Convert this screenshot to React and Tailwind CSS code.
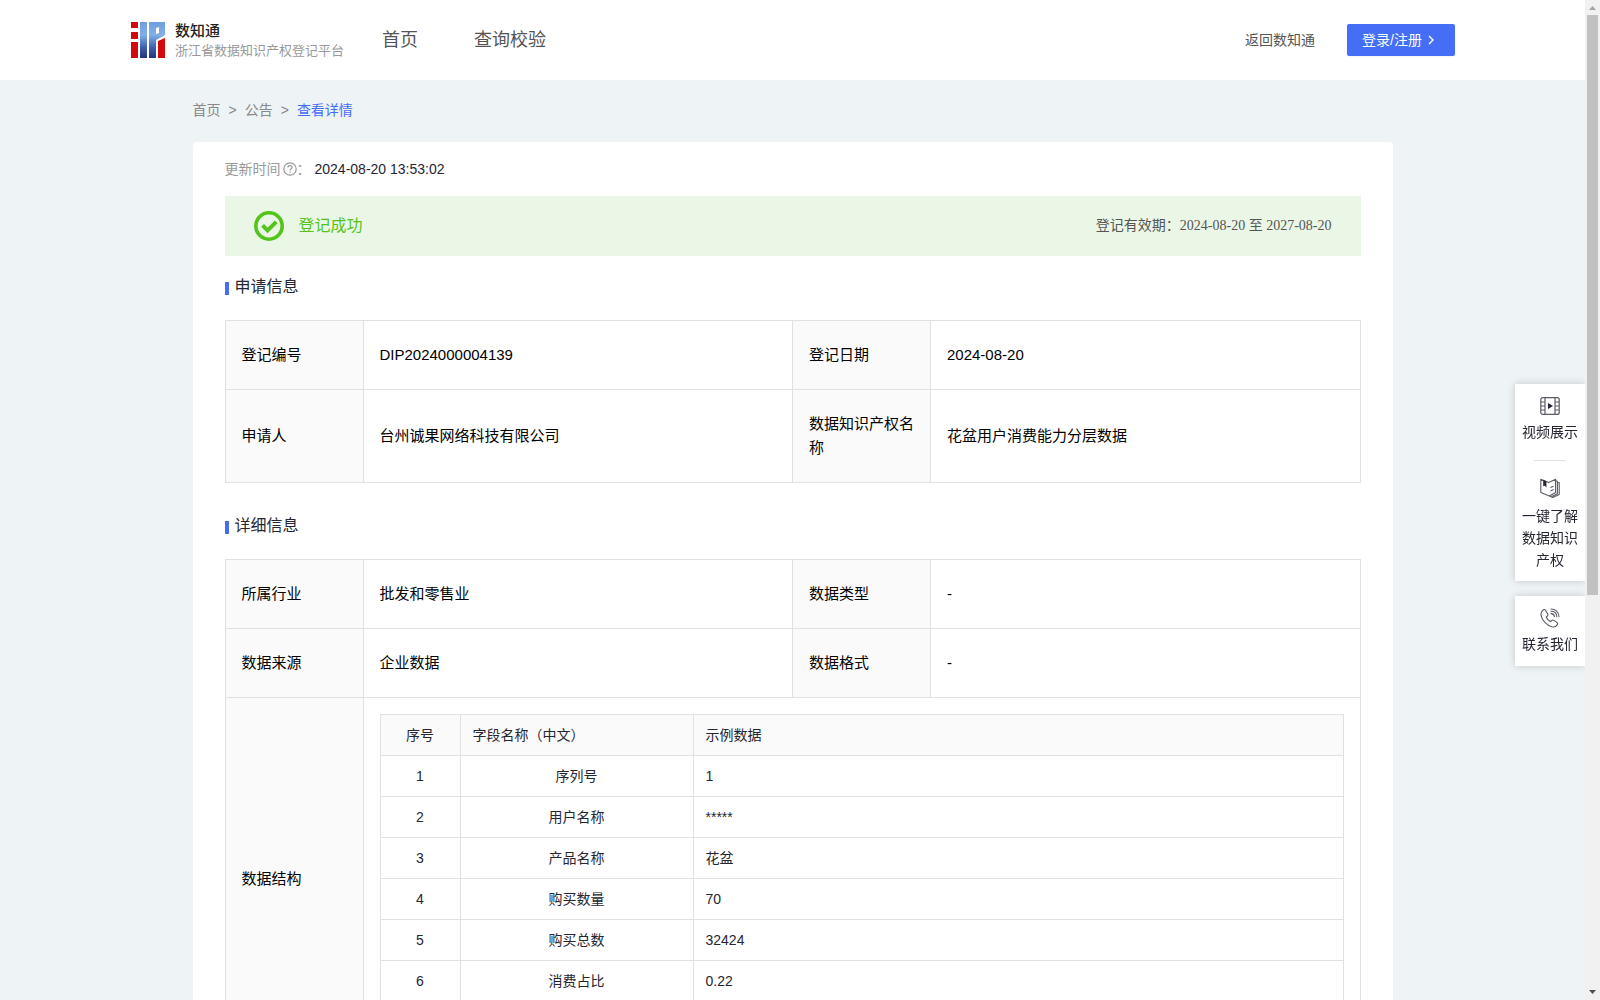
import React from 'react';

const fields = [
  { name: '序列号', sample: '1' },
  { name: '用户名称', sample: '*****' },
  { name: '产品名称', sample: '花盆' },
  { name: '购买数量', sample: '70' },
  { name: '购买总数', sample: '32424' },
  { name: '消费占比', sample: '0.22' },
];

const LogoIcon = () => (
  <svg className="w-[34px] h-9 shrink-0" viewBox="0 0 34 36">
    <defs>
      <linearGradient id="logoBlue" x1="0" y1="0" x2="0" y2="36" gradientUnits="userSpaceOnUse">
        <stop offset="0" stopColor="#6f9ede" />
        <stop offset="0.35" stopColor="#82b1e8" />
        <stop offset="0.7" stopColor="#3f62ae" />
        <stop offset="1" stopColor="#22357c" />
      </linearGradient>
    </defs>
    <path fill="#d20a10" d="M0 0h7v6H0zM0 10h7v7H0zM0 20h7v16H0zM27 19l7-3v20h-7z" />
    <path fill="url(#logoBlue)" fillRule="evenodd" d="M9 0h7v36H9zM18 0h16v13l-9 5v18h-7zM25 6v6l3-1V5z" />
  </svg>
);

const FilmIcon = () => (
  <svg className="w-5 h-5" viewBox="0 0 20 20" fill="none" stroke="#5a5b64" strokeWidth="1.2">
    <rect x="0.8" y="1.6" width="18.4" height="16.8" rx="2" />
    <path d="M5 2v16M15 2v16M1 6h4M1 10h4M1 14h4M15 6h4M15 10h4M15 14h4" />
    <path d="M8 7l5 3-5 3z" fill="#252631" stroke="none" />
  </svg>
);

const BookIcon = () => (
  <svg className="w-5 h-5" viewBox="0 0 20 20" fill="none" stroke="#5a5b64" strokeWidth="1.1" strokeLinejoin="round">
    <path d="M0.8 1.2L8.6 4.6 15.6 1.2V14.400L9.400 18 0.800 14.600z" />
    <path d="M15.600 2.800l1.800 0.400v12.600l-6 3M17.400 4.200l1.800 0.400v11.800l-6.400 3-3.400-1.400M10.4 9.6l3.200-1.400M10.4 13l3.200-1.400" />
    <path d="M3.2 1.8L6.4 3.2v6.2L4.8 7.8 3.2 8.2z" fill="#252631" stroke="none" />
  </svg>
);

const PhoneIcon = () => (
  <svg className="w-5 h-5" viewBox="0 0 20 20" fill="none" stroke="#5a5b64" strokeWidth="1.1" strokeLinecap="round" strokeLinejoin="round">
    <path d="M3.4 1.8C1.4 3.2 0.6 5 1 7.2c1 5.200 5.600 10.200 11 11.600 2.400 0.500 4.400-0.200 5.400-2.200 0.400-0.900 0.200-1.600-0.600-2.200l-2.800-2c-0.900-0.600-1.700-0.500-2.400 0.300l-0.900 1c-2-0.900-3.700-2.700-4.500-4.700l1-0.900c0.800-0.700 0.900-1.500 0.400-2.400L5.600 2.400C5 1.500 4.300 1.300 3.400 1.800z" />
    <path d="M11 1c4.400 0 7.800 3.200 8 7.600M11 3.200c3.200 0 5.600 2.200 5.800 5.400M11 5.600c1.900 0 3.200 1.200 3.400 3" />
  </svg>
);

const SuccessIcon = () => (
  <svg className="w-[30px] h-[30px]" viewBox="0 0 30 30" fill="none" stroke="#52c41a">
    <circle cx="15" cy="15" r="13.2" strokeWidth="3.6" />
    <path d="M8.600 14.400l5 5 8.600-8.600" strokeWidth="4" />
  </svg>
);

const SectionTitle = ({ children }) => (
  <h2 className="flex items-end gap-1.5 mb-[21px] text-base leading-6 text-[#252631]">
    <span className="w-1 h-[13px] mb-1 bg-[#446ef6]" />
    {children}
  </h2>
);

const Label = ({ children }) => (
  <th scope="row" className="border border-[#e1e1e1] bg-[#fafafa] px-4 text-left font-normal">{children}</th>
);

const Value = ({ children }) => (
  <td className="border border-[#e1e1e1] px-4">{children}</td>
);

const InfoTable = ({ children }) => (
  <table className="w-full table-fixed border-collapse text-[15px] leading-6 text-black">
    <colgroup>
      <col className="w-[138px]" />
      <col />
      <col className="w-[138px]" />
      <col />
    </colgroup>
    <tbody>{children}</tbody>
  </table>
);

const Header = () => (
  <header className="flex items-center h-20 pl-[131px] pr-[130px] bg-white">
    <a href="#" className="flex items-center gap-2.5">
      <LogoIcon />
      <span className="flex flex-col pt-0.5">
        <span className="text-[15px] leading-5 font-medium text-[#222]">数知通</span>
        <span className="text-[13px] leading-5 text-[#999]">浙江省数据知识产权登记平台</span>
      </span>
    </a>
    <nav className="flex gap-14 ml-[38px] text-lg text-[#555]">
      <a href="#">首页</a>
      <a href="#">查询校验</a>
    </nav>
    <div className="flex items-center gap-8 ml-auto text-sm">
      <a href="#" className="text-[#555]">返回数知通</a>
      <button className="flex items-center gap-1 w-[108px] h-8 px-[15px] rounded-xs bg-[#446ef6] text-white shadow-xs">
        登录/注册
        <svg className="w-2.5 h-2.5" viewBox="0 0 10 10" fill="none" stroke="currentColor" strokeWidth="1.4">
          <path d="M3 1l4 4-4 4" />
        </svg>
      </button>
    </div>
  </header>
);

// Quick links pinned to the right edge of the page
const SideTools = () => (
  <aside className="absolute right-0 top-[384px] flex flex-col gap-[15px] w-[70px] text-sm leading-[22px] text-center text-[#252631]">
    <div className="flex flex-col items-center px-[7px] pt-3 pb-2.5 bg-white shadow-[0_0_8px_rgba(0,0,0,0.18)]">
      <a href="#" className="flex flex-col items-center gap-[5px]">
        <FilmIcon />
        视频展示
      </a>
      <hr className="w-8 my-[17px] border-[#e1e1e1]" />
      <a href="#" className="flex flex-col items-center gap-[7px]">
        <BookIcon />
        一键了解数据知识产权
      </a>
    </div>
    <a href="#" className="flex flex-col items-center gap-[5px] px-[7px] pt-3 pb-[11px] bg-white shadow-[0_0_8px_rgba(0,0,0,0.18)]">
      <PhoneIcon />
      联系我们
    </a>
  </aside>
);

const ScrollTrack = () => (
  <div className="flex flex-col items-center justify-between w-[15px] shrink-0 bg-[#f1f1f1]">
    <svg className="w-[15px] h-[15px] shrink-0" viewBox="0 0 15 15"><path d="M4 10l3.500-4 3.500 4z" fill="#a3a3a3" /></svg>
    <div className="w-[11px] h-[58%] mb-auto bg-[#c1c1c1]" />
    <svg className="w-[15px] h-[15px] shrink-0" viewBox="0 0 15 15"><path d="M4 5l3.500 4 3.500-4z" fill="#505050" /></svg>
  </div>
);

const App = () => {
  return (
    <div className="flex h-screen font-['Liberation_Sans','Noto_Sans_CJK_SC',sans-serif]">
      <div className="relative flex-1 min-w-0 overflow-hidden">
        <div className="h-full overflow-y-auto [scrollbar-width:none] bg-[#eef3f6]">
          <Header />
          <main className="max-w-[1200px] mx-auto">
            <nav className="flex items-center gap-2 pt-5 pb-[22px] text-sm leading-5 text-[#888]">
              <a href="#">首页</a>
              <span>&gt;</span>
              <a href="#">公告</a>
              <span>&gt;</span>
              <a href="#" className="text-[#446ef6]">查看详情</a>
            </nav>

            <div className="px-8 pt-[17px] pb-8 rounded-sm bg-white">
              <div className="flex items-center mb-[17px] text-sm leading-5 text-[#999]">
                更新时间
                <svg className="w-3.5 h-3.5 ml-0.5" viewBox="0 0 14 14" fill="none" stroke="#999" strokeWidth="1.2">
                  <circle cx="7" cy="7" r="6.2" />
                  <path d="M5 5.600c0-2.600 4-2.600 4 0 0 1.400-2 1.400-2 2.800M7 9.400v1.300" />
                </svg>
                ：
                <span className="ml-1 text-[#252631]">2024-08-20 13:53:02</span>
              </div>

              {/* Registration status */}
              <div className="flex items-center h-[60px] px-[29px] mb-[19px] bg-[#ebf7e6]">
                <SuccessIcon />
                <span className="ml-[15px] text-base text-[#52c41a]">登记成功</span>
                <span className="ml-auto text-sm text-[#555] font-['Liberation_Serif','Noto_Sans_CJK_SC',serif]">
                  登记有效期：2024-08-20 至 2027-08-20
                </span>
              </div>

              <section className="mb-[31px]">
                <SectionTitle>申请信息</SectionTitle>
                <InfoTable>
                  <tr className="h-[69px]">
                    <Label>登记编号</Label>
                    <Value>DIP2024000004139</Value>
                    <Label>登记日期</Label>
                    <Value>2024-08-20</Value>
                  </tr>
                  <tr className="h-[93px]">
                    <Label>申请人</Label>
                    <Value>台州诚果网络科技有限公司</Value>
                    <Label>数据知识产权名称</Label>
                    <Value>花盆用户消费能力分层数据</Value>
                  </tr>
                </InfoTable>
              </section>

              <section>
                <SectionTitle>详细信息</SectionTitle>
                <InfoTable>
                  <tr className="h-[69px]">
                    <Label>所属行业</Label>
                    <Value>批发和零售业</Value>
                    <Label>数据类型</Label>
                    <Value>-</Value>
                  </tr>
                  <tr className="h-[69px]">
                    <Label>数据来源</Label>
                    <Value>企业数据</Value>
                    <Label>数据格式</Label>
                    <Value>-</Value>
                  </tr>
                  <tr className="h-[362px]">
                    <Label>数据结构</Label>
                    <td colSpan={3} className="border border-[#e1e1e1] p-4 align-top">
                      <table className="w-full table-fixed border-collapse text-sm text-[#252631]">
                        <thead>
                          <tr className="h-[41px] bg-[#fafafa]">
                            <th className="w-20 border border-[#e1e1e1] font-normal">序号</th>
                            <th className="w-[233px] border border-[#e1e1e1] px-3 text-left font-normal">字段名称（中文）</th>
                            <th className="border border-[#e1e1e1] px-3 text-left font-normal">示例数据</th>
                          </tr>
                        </thead>
                        <tbody>
                          {fields.map((field, index) => (
                            <tr key={index} className="h-[41px]">
                              <td className="border border-[#e1e1e1] text-center">{index + 1}</td>
                              <td className="border border-[#e1e1e1] text-center">{field.name}</td>
                              <td className="border border-[#e1e1e1] px-3">{field.sample}</td>
                            </tr>
                          ))}
                        </tbody>
                      </table>
                    </td>
                  </tr>
                </InfoTable>
              </section>
            </div>
          </main>
        </div>
        <SideTools />
      </div>
      <ScrollTrack />
    </div>
  );
};

export default App;
